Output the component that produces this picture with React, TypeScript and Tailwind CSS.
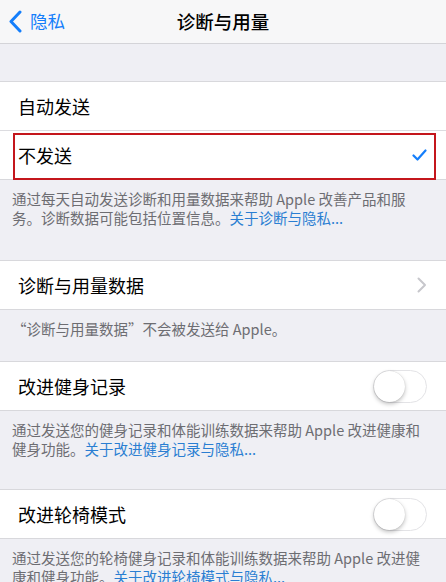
import React from 'react';

const FONT = { fontFamily: '"Noto Sans CJK SC", "Noto Sans", sans-serif' };

function Toggle() {
  return (
    <div className="relative h-[33px] w-[54px] rounded-full border border-[#e3e3e6] bg-white">
      <div className="absolute left-0 top-0 h-[31px] w-[31px] rounded-full bg-white shadow-[0_2px_4px_rgba(0,0,0,0.25),0_0_1px_rgba(0,0,0,0.2)]" />
    </div>
  );
}

function Row({ label, right }: { label: string; right?: React.ReactNode }) {
  return (
    <div className="flex h-[48px] items-center justify-between bg-white pl-[18px] pr-[19px]">
      <span className="text-[18px] text-black">{label}</span>
      {right}
    </div>
  );
}

function Footer({ lines, link, h }: { lines: string[]; link: string; h: string }) {
  return (
    <div className={`px-[12px] pt-[9px] text-[14.5px] leading-[19px] text-[#6d6d72] ${h}`}>
      {lines.map((l, i) => (
        <div key={i} className="whitespace-nowrap">
          {l}
          {i === lines.length - 1 && link && <span className="text-[#2a7ed2]">{link}</span>}
        </div>
      ))}
    </div>
  );
}

export default function App() {
  return (
    <div className="h-[582px] w-[446px] overflow-hidden bg-[#efeff4]" style={FONT}>
      {/* nav bar */}
      <div className="relative flex h-[44px] items-center border-b border-[#d4d4d8] bg-[#f7f7f8]">
        <div className="flex items-center pl-[8px]">
          <svg width="14" height="23" viewBox="0 0 14 23" fill="none">
            <path d="M12 2L3 11.5L12 21" stroke="#147efb" strokeWidth="3" strokeLinecap="round" strokeLinejoin="round" />
          </svg>
          <span className="ml-[8px] text-[17.5px] text-[#147efb]">隐私</span>
        </div>
        <div className="absolute inset-x-0 top-0 flex h-[43px] items-center justify-center pointer-events-none">
          <span className="text-[18.5px] font-medium text-black">诊断与用量</span>
        </div>
      </div>

      <div className="h-[37px]" />

      {/* group 1 */}
      <div className="border-y border-[#d8d8dc]">
        <Row label="自动发送" />
        <div className="h-px bg-[#dcdce0]" />
        <div className="relative">
          <Row
            label="不发送"
            right={
              <svg width="15" height="12" viewBox="0 0 15 12" fill="none">
                <path d="M1.5 6.5L5.5 10.5L13.5 1.5" stroke="#147efb" strokeWidth="2.2" strokeLinecap="round" strokeLinejoin="round" />
              </svg>
            }
          />
          <div className="pointer-events-none absolute left-[13px] right-[10px] top-[2px] bottom-[-1px] border-2 border-[#c4161c]" />
        </div>
      </div>
      <Footer
        h="h-[80px]"
        lines={['通过每天自动发送诊断和用量数据来帮助 Apple 改善产品和服', '务。诊断数据可能包括位置信息。']}
        link="关于诊断与隐私..."
      />

      {/* group 2 */}
      <div className="border-y border-[#d8d8dc]">
        <Row
          label="诊断与用量数据"
          right={
            <svg width="10" height="16" viewBox="0 0 10 16" fill="none">
              <path d="M1.5 1.5L8 8L1.5 14.5" stroke="#c7c7cc" strokeWidth="2" strokeLinecap="round" strokeLinejoin="round" />
            </svg>
          }
        />
      </div>
      <Footer h="h-[51px]" lines={['“诊断与用量数据”不会被发送给 Apple。']} link="" />

      {/* group 3 */}
      <div className="border-y border-[#d8d8dc]">
        <Row label="改进健身记录" right={<Toggle />} />
      </div>
      <Footer
        h="h-[78px]"
        lines={['通过发送您的健身记录和体能训练数据来帮助 Apple 改进健康和', '健身功能。']}
        link="关于改进健身记录与隐私..."
      />

      {/* group 4 */}
      <div className="border-y border-[#d8d8dc]">
        <Row label="改进轮椅模式" right={<Toggle />} />
      </div>
      <Footer
        h="h-[60px]"
        lines={['通过发送您的轮椅健身记录和体能训练数据来帮助 Apple 改进健', '康和健身功能。']}
        link="关于改进轮椅模式与隐私..."
      />
    </div>
  );
}
